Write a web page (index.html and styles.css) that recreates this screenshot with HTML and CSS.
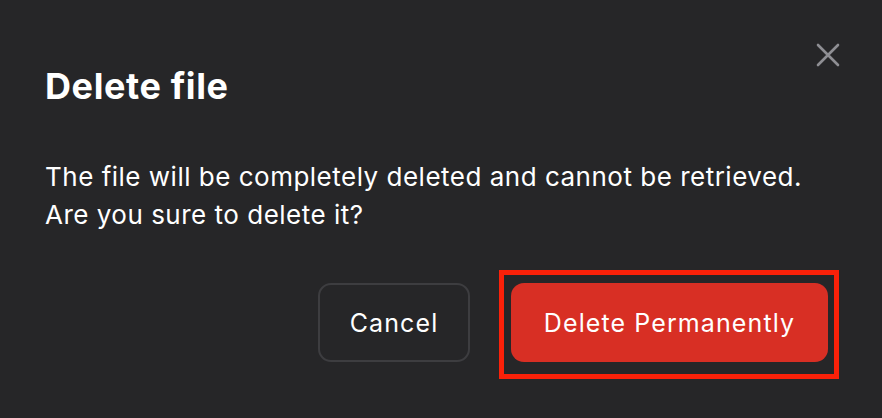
FILE: index.html
```html
<!DOCTYPE html>
<html lang="en">
<head>
    <meta charset="UTF-8">
    <meta name="viewport" content="width=device-width, initial-scale=1.0">
    <title>Delete file</title>
    <link rel="stylesheet" href="styles.css">
</head>
<body>
    <div class="dialog">
        <button class="close-btn" aria-label="Close">
            <svg width="24" height="24" viewBox="0 0 24 24">
                <path d="M2 2 L22 22 M22 2 L2 22" stroke="#8e8e93" stroke-width="2.6" stroke-linecap="round" fill="none"/>
            </svg>
        </button>

        <h2 class="dialog-title">Delete file</h2>
        <p class="dialog-text">The file will be completely deleted and cannot be retrieved.<br>Are you sure to delete it?</p>

        <div class="dialog-actions">
            <button class="btn btn-cancel">Cancel</button>
            <div class="highlight">
                <button class="btn btn-danger">Delete Permanently</button>
            </div>
        </div>
    </div>
</body>
</html>
```

FILE: styles.css
```css
body {
    margin: 0;
    background: #262628;
    font-family: 'Inter', 'Liberation Sans', sans-serif;
    color: #ffffff;
}
.dialog {
    position: relative;
    width: 882px;
    height: 418px;
    box-sizing: border-box;
    padding: 64px 54px 0 45px;
    background: #262628;
}
.close-btn {
    position: absolute;
    top: 43px;
    right: 42px;
    padding: 0;
    border: none;
    background: none;
    display: flex;
}
.dialog-title {
    margin: 0;
    font-size: 36px;
    line-height: 44px;
    font-weight: 700;
    letter-spacing: 0.6px;
}
.dialog-text {
    margin: 50px 0 0;
    font-size: 26px;
    line-height: 38px;
    font-weight: 400;
    letter-spacing: 0.5px;
}
.dialog-actions {
    display: flex;
    justify-content: flex-end;
    gap: 41px;
    margin-top: 49px;
}
.btn {
    height: 79px;
    padding: 0;
    border-radius: 13px;
    font-family: inherit;
    font-size: 25px;
    letter-spacing: 1.1px;
    color: #ffffff;
    cursor: pointer;
}
.btn-cancel {
    width: 152px;
    background: transparent;
    border: 2px solid #3d3d40;
}
.btn-danger {
    width: 317px;
    background: #d82f24;
    border: none;
}
.highlight {
    position: relative;
}
.highlight::after {
    content: '';
    position: absolute;
    left: -12px;
    top: -13px;
    right: -11px;
    bottom: -17px;
    border: 5px solid #fa2109;
    pointer-events: none;
}
```
